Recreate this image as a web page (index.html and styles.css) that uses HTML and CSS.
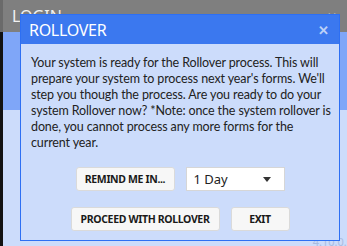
FILE: index.html
```html
<!DOCTYPE html>
<html lang="en">
<head>
  <meta charset="UTF-8">
  <title>Rollover</title>
  <link rel="stylesheet" href="styles.css">
</head>
<body>
  <div class="login-window">
    <div class="login-header">
      <div class="login-title">LOGIN</div>
      <div class="login-close">&#x2715;</div>
    </div>
    <div class="login-band"></div>
    <div class="login-body">
      <div class="version">4.10.0.0</div>
    </div>
  </div>

  <!-- rollover modal -->
  <div class="modal">
    <div class="modal-header">
      <div class="modal-title">ROLLOVER</div>
      <div class="modal-close">&#x2715;</div>
    </div>
    <div class="modal-body">
      <p class="message">Your system is ready for the Rollover process. This will prepare your system to process next year's forms. We'll step you though the process. Are you ready to do your system Rollover now? *Note: once the system rollover is done, you cannot process any more forms for the current year.</p>
      <div class="button-row">
        <button class="btn btn-remind">REMIND ME IN...</button>
        <div class="select-box">
          <span>1 Day</span>
          <span class="caret"></span>
        </div>
      </div>
      <div class="button-row">
        <button class="btn btn-wide">PROCEED WITH ROLLOVER</button>
        <button class="btn btn-exit">EXIT</button>
      </div>
    </div>
  </div>
</body>
</html>
```

FILE: styles.css
```css
body {
  margin: 0;
  padding: 0;
  font-family: "Noto Sans", "Open Sans", sans-serif;
  background: linear-gradient(#6a6a6a 0, #6a6a6a 32px, #121212 32px);
  width: 347px;
  height: 246px;
  overflow: hidden;
  position: relative;
}
.login-window {
  margin-left: 3px;
  height: 246px;
  background: #ccdcfb;
  display: flex;
  flex-direction: column;
}
.login-header {
  height: 32px;
  background: #7f7f7f;
  display: flex;
  justify-content: space-between;
  align-items: center;
  padding: 0 10px 0 9px;
  color: #f2f2f2;
}
.login-title {
  font-size: 16px;
}
.login-close {
  font-size: 12px;
  color: #dcdcdc;
}
.login-band {
  height: 78px;
  background: #7fa6f8;
}
.login-body {
  flex-grow: 1;
  position: relative;
}
.version {
  position: absolute;
  right: -6px;
  bottom: -3px;
  font-size: 11px;
  color: #a9bbe0;
}

/* Modal */
.modal {
  position: absolute;
  left: 20px;
  top: 14px;
  width: 318px;
  height: 225px;
  border: 1px solid #2d6ff3;
  background: #ccdcfb;
  display: flex;
  flex-direction: column;
}
.modal-header {
  height: 29px;
  background: #3b78ef;
  color: white;
  display: flex;
  justify-content: space-between;
  align-items: center;
  padding: 0 10px 0 8px;
  flex-shrink: 0;
}
.modal-title {
  font-size: 16px;
  letter-spacing: -0.3px;
}
.modal-close {
  font-size: 13px;
  font-weight: bold;
  color: #bcd0f7;
}
.modal-body {
  padding: 11px 6px 0 10px;
}
.message {
  margin: 0;
  font-family: Lato, "Noto Sans", sans-serif;
  font-size: 12.5px;
  letter-spacing: -0.12px;
  line-height: 16px;
  color: #222;
}
.button-row {
  display: flex;
  justify-content: center;
  gap: 11px;
  margin-top: 16px;
  padding-right: 4px;
}
.button-row + .button-row {
  margin-top: 16px;
}
.btn {
  height: 24px;
  background: #f7f7f7;
  border: 1px solid #dadada;
  border-radius: 3px;
  font-family: inherit;
  font-size: 10.5px;
  font-weight: bold;
  color: #1a1a1a;
  padding: 0;
  letter-spacing: -0.35px;
}
.btn-remind {
  width: 99px;
}
.btn-wide {
  width: 149px;
}
.btn-exit {
  width: 59px;
}
.select-box {
  width: 99px;
  height: 24px;
  box-sizing: border-box;
  background: white;
  border: 1px solid #d6d6d6;
  display: flex;
  justify-content: space-between;
  align-items: center;
  padding: 0 13px 0 7px;
  font-size: 13px;
  color: #222;
}
.caret {
  width: 0;
  height: 0;
  border-left: 4px solid transparent;
  border-right: 4px solid transparent;
  border-top: 5px solid #333;
}
```
